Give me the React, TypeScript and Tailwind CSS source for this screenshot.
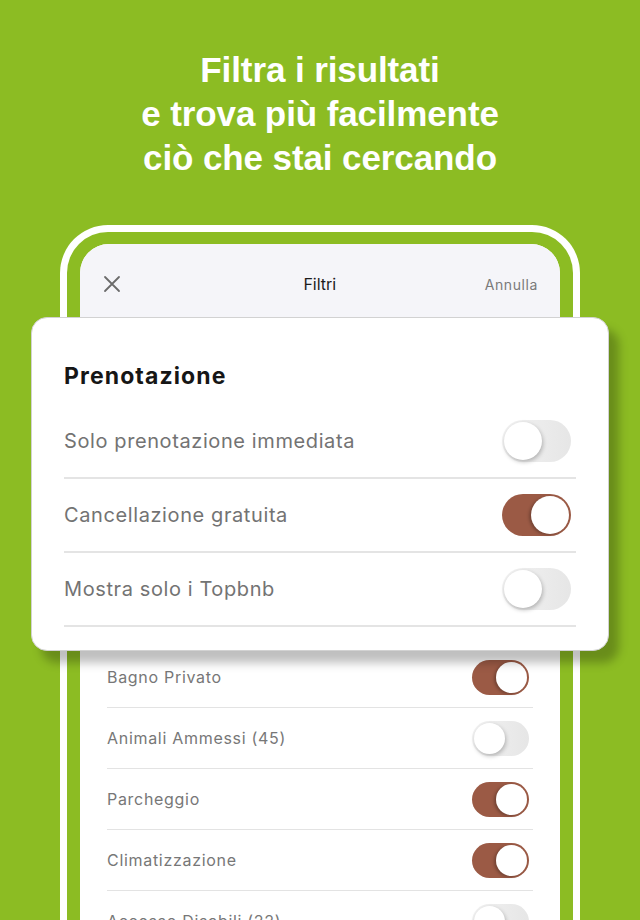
import React from 'react';

interface Row {
  label: string;
  on: boolean;
}

const BOOKING: Row[] = [
  { label: 'Solo prenotazione immediata', on: false },
  { label: 'Cancellazione gratuita', on: true },
  { label: 'Mostra solo i Topbnb', on: false },
];

const SERVICES: Row[] = [
  { label: 'Bagno Privato', on: true },
  { label: 'Animali Ammessi (45)', on: false },
  { label: 'Parcheggio', on: true },
  { label: 'Climatizzazione', on: true },
  { label: 'Accesso Disabili (22)', on: false },
];

function Toggle({ on, big }: { on: boolean; big?: boolean }) {
  const size = big ? 'w-[69px] h-[42px] p-[2px]' : 'w-[57px] h-[35px] p-[2px]';
  const knob = big ? 'w-[38px] h-[38px]' : 'w-[31px] h-[31px]';
  return (
    <div
      className={`${size} shrink-0 rounded-full flex items-center ${
        on ? 'bg-[#9b5a45] justify-end' : 'bg-gradient-to-r from-[#f2f2f2] to-[#e6e6e6] justify-start'
      }`}
    >
      <div
        className={`${knob} rounded-full bg-white ${
          on ? 'shadow-[-2px_1px_3px_rgba(0,0,0,0.25)]' : 'shadow-[1px_2px_4px_rgba(0,0,0,0.25)]'
        }`}
      />
    </div>
  );
}

export default function App() {
  return (
    <div className="relative w-[640px] h-[920px] overflow-hidden bg-[#8cbc23] font-['Inter',sans-serif]">
      {/* headline */}
      <h1 className="pt-[48px] text-center text-white font-bold text-[35px] leading-[44px] tracking-[-0.1px] font-['Liberation_Sans',Arial,sans-serif]">
        Filtra i risultati
        <br />
        e trova più facilmente
        <br />
        ciò che stai cercando
      </h1>

      {/* phone frame */}
      <div className="mt-[45px] mx-[60px] h-[720px] border-[7px] border-b-0 border-white rounded-t-[48px] px-[13px] pt-[12px]">
        <div className="h-full rounded-t-[29px] bg-white overflow-hidden">
          <div className="h-[80px] bg-[#f5f5f9] flex items-center justify-between px-[22px]">
            <svg width="18" height="18" viewBox="0 0 18 18" className="ml-[1px]">
              <path d="M2 2L16 16M16 2L2 16" stroke="#6b6b6b" strokeWidth="1.8" strokeLinecap="round" />
            </svg>
            <span className="text-[16px] text-[#1c1c1c] pl-[34px]">Filtri</span>
            <span className="text-[14px] text-[#7a7a7a] tracking-[0.6px]">Annulla</span>
          </div>
          <div className="h-[323px]" />
          <div className="px-[27px]">
            {SERVICES.map((r) => (
              <div key={r.label} className="h-[61px] flex items-center justify-between border-b border-[#e3e3e3] pr-[4px]">
                <span className="text-[16px] text-[#777] tracking-[0.7px]">{r.label}</span>
                <Toggle on={r.on} />
              </div>
            ))}
          </div>
        </div>
      </div>

      {/* floating card */}
      <div className="absolute left-[31px] top-[317px] w-[578px] bg-white border-[1.5px] border-[#d2d2d2] rounded-[16px] px-[32px] pt-[44px] pb-[23px] shadow-[10px_12px_10px_rgba(0,0,0,0.25)]">
        <h2 className="text-[23px] leading-[28px] font-bold text-[#161616] tracking-[1.1px] mb-[15px]">Prenotazione</h2>
        {BOOKING.map((r) => (
          <div key={r.label} className="h-[74px] flex items-center justify-between border-b-2 border-[#e4e4e4] pr-[5px]">
            <span className="text-[20px] text-[#737373] tracking-[0.6px]">{r.label}</span>
            <Toggle on={r.on} big />
          </div>
        ))}
      </div>
    </div>
  );
}
